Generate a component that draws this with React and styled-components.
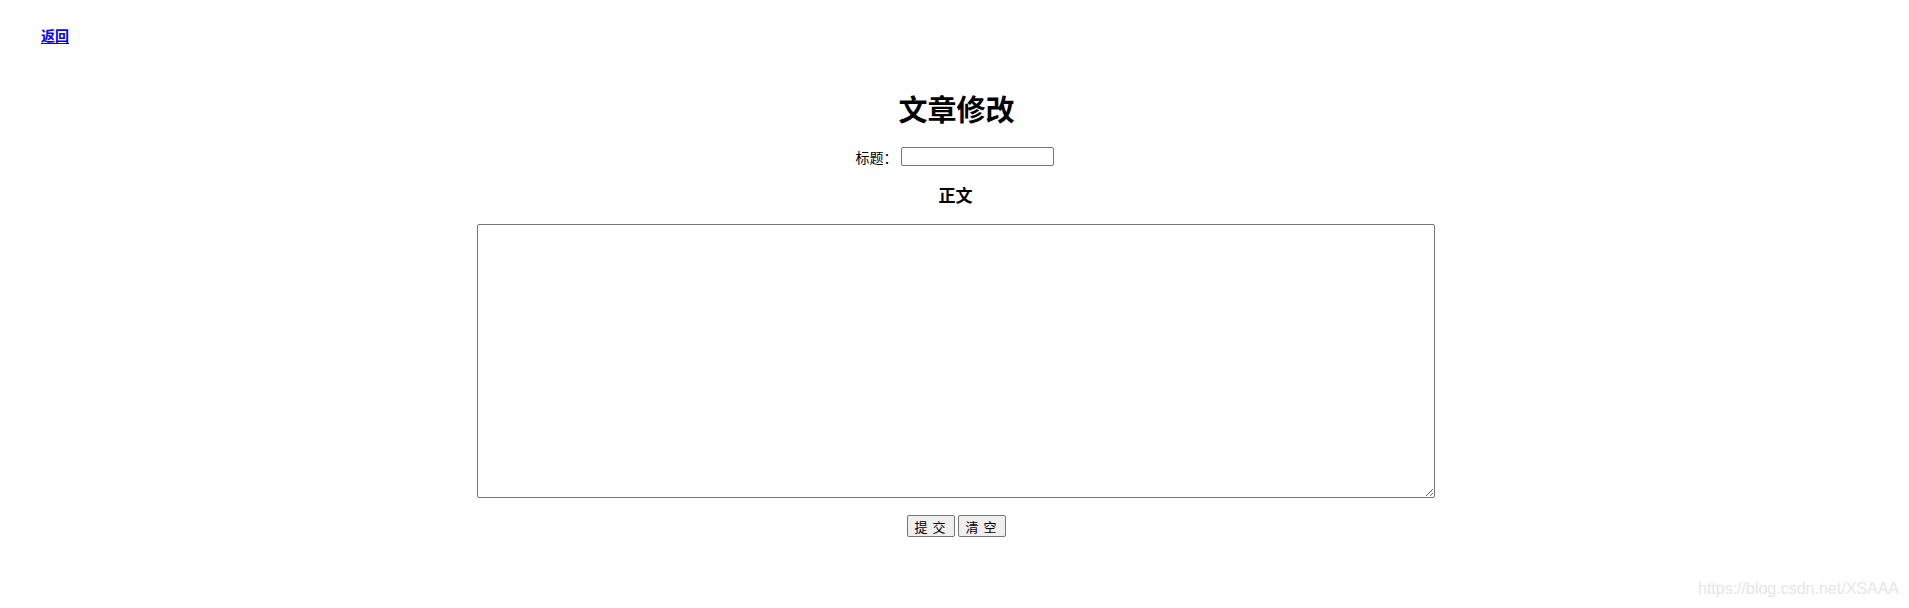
import styled, { createGlobalStyle } from 'styled-components'

const GlobalStyle = createGlobalStyle`
  html, body {
    margin: 0;
    padding: 0;
    background: #fff;
  }
  body {
    font-family: "Noto Sans CJK SC", "Noto Sans", sans-serif;
  }
`

export default function App() {
  return (
    <Page>
      <GlobalStyle />
      <Back href="#">返回</Back>
      <Main>
        <Title>文章修改</Title>
        <Field>
          <Label>标题：</Label>
          <TextInput type="text" />
        </Field>
        <Subtitle>正文</Subtitle>
        <Body />
        <Actions>
          <Button type="button">提 交</Button>
          <Button type="button">清 空</Button>
        </Actions>
      </Main>
      <Watermark>https://blog.csdn.net/XSAAA</Watermark>
    </Page>
  )
}

const Page = styled.div`
  position: relative;
  height: 608px;
  display: flex;
  flex-direction: column;
`

const Back = styled.a`
  align-self: flex-start;
  margin: 28px 0 0 41px;
  font-size: 14px;
  line-height: 14px;
  font-weight: bold;
  color: #0000ff;
  text-decoration: underline;
  text-underline-offset: 2px;
`

const Main = styled.div`
  display: flex;
  flex-direction: column;
  align-items: center;
`

const Title = styled.h1`
  margin: 51px 0 0 4px;
  font-size: 29px;
  line-height: 30px;
  font-weight: bold;
  color: #000;
`

const Field = styled.div`
  margin-top: 24px;
  display: flex;
  align-items: center;
  gap: 3px;
  height: 19px;
`

const Label = styled.span`
  font-size: 14px;
  line-height: 14px;
  color: #000;
`

const TextInput = styled.input`
  box-sizing: border-box;
  width: 153px;
  height: 19px;
  margin: 0;
  padding: 1px 2px;
  border: 1px solid #767676;
  border-radius: 2px;
  font-size: 13px;
`

const Subtitle = styled.h3`
  margin: 20px 0 0 2px;
  font-size: 17px;
  line-height: 17px;
  font-weight: bold;
  color: #000;
`

const Body = styled.textarea`
  box-sizing: border-box;
  margin: 21px 0 0 2px;
  width: 958px;
  height: 274px;
  border: 1px solid #767676;
  border-radius: 2px;
  padding: 2px;
  font-size: 13px;
`

const Actions = styled.div`
  margin: 17px 0 0 3px;
  display: flex;
  gap: 3px;
`

const Button = styled.button`
  box-sizing: border-box;
  width: 48px;
  height: 22px;
  padding: 0;
  background: #efefef;
  border: 1px solid #767676;
  border-radius: 2px;
  font-family: "Noto Sans CJK SC", sans-serif;
  font-size: 13px;
  line-height: 13px;
  letter-spacing: 1px;
  color: #000;
`

const Watermark = styled.div`
  position: absolute;
  right: 10px;
  top: 580px;
  font-family: "Liberation Sans", Arial, sans-serif;
  font-size: 16px;
  line-height: 18px;
  color: #e6e6e6;
`
